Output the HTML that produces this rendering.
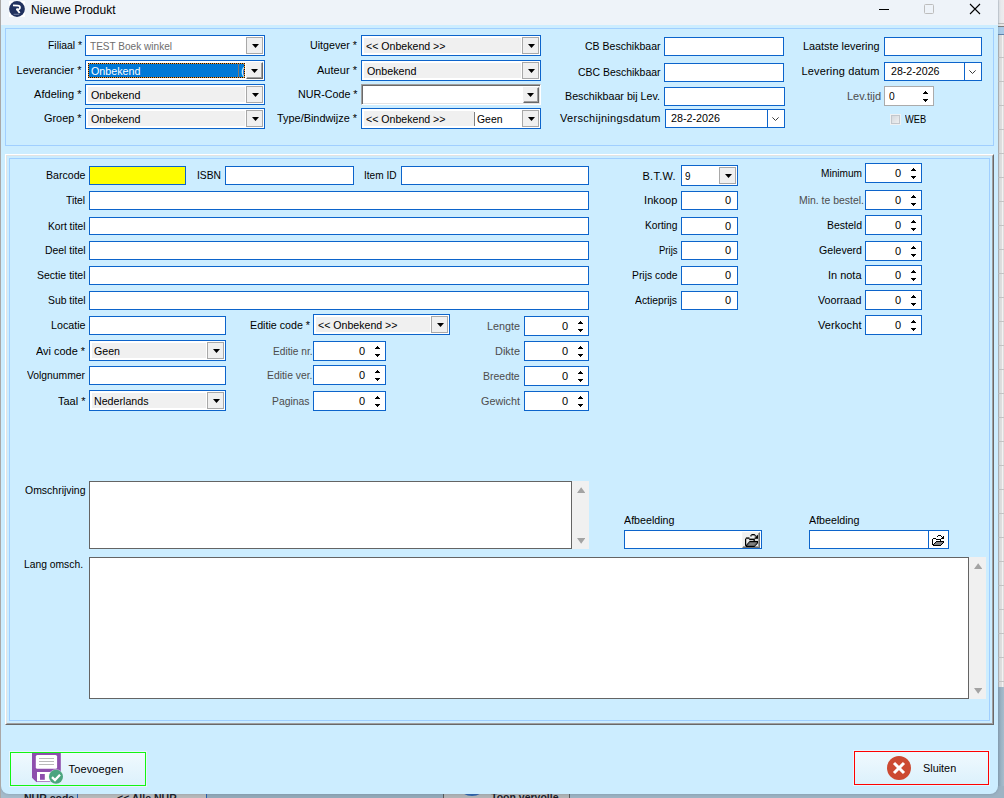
<!DOCTYPE html>
<html lang="nl"><head><meta charset="utf-8"><title>Nieuwe Produkt</title>
<style>

html,body{margin:0;padding:0}
body{width:1004px;height:798px;overflow:hidden;position:relative;background:#e9e9e9;font-family:"Liberation Sans",Arial,sans-serif;font-size:11px;color:#000}
#bgapp{position:absolute;left:0;top:0;width:1004px;height:798px;background:#e4e4e4}
#win{position:absolute;left:1px;top:0;width:997px;height:794px;background:#ccedff;border-radius:0 0 8px 8px;overflow:hidden;box-shadow:0 0 3px 0 rgba(60,90,120,.35)}
#tb{position:absolute;left:0;top:0;width:997px;height:25px;background:#eef3f9}
#ui{position:absolute;left:0;top:0;width:1004px;height:798px}
#ui div,#ui span{position:absolute}
#ui svg{position:absolute}
.in{box-sizing:border-box;border:1px solid #0c64cb;background:#fff}
.cb{box-sizing:border-box;border:1px solid #0c64cb;background:#fff}
#ui .cbf{left:2px;top:2px;bottom:2px;right:19px}
#ui .cbb{right:1px;top:1px;width:17px;height:17px;box-sizing:border-box}
.cbb.flat{background:#f0f0f0;border:1px solid #a8a8a8}
.cbb.raised{background:#f0f0f0;border:1px solid;border-color:#f0f0f0 #696969 #696969 #f0f0f0;box-shadow:inset -1px -1px 0 #a0a0a0}
#ui .cbb .ar{left:4.500px;top:6px}
#ui .cbb.raised .ar{left:4px;top:6px}
.nur{box-sizing:border-box;background:#fff;border:1px solid;border-color:#a0a0a0 #fff #fff #a0a0a0;box-shadow:inset 1px 1px 0 #696969,inset -1px -1px 0 #e3e3e3}
.t{white-space:nowrap;line-height:14px;height:14px;transform-origin:0 50%}

</style></head><body>
<div id="bgapp"></div>
<div style="position:absolute;left:998px;top:0;width:6px;height:23px;background:linear-gradient(90deg,#c9cdd4 0,#e6e7ea 1.5px,#ececee 6px)"></div>
<div style="position:absolute;left:998px;top:23px;width:6px;height:4px;background:linear-gradient(#bcbcbc 0,#bcbcbc 1px,#e6e6e6 1px,#e6e6e6 3px,#7d7d7d 3px)"></div>
<div style="position:absolute;left:998px;top:27px;width:6px;height:8px;background:linear-gradient(#a9cbe8 0,#a9cbe8 7px,#5d82ab 7px)"></div>
<div style="position:absolute;left:998px;top:35px;width:6px;height:652px;background:repeating-linear-gradient(180deg,transparent 0,transparent 22px,#c4c4c4 22px,#c4c4c4 23px,transparent 23px,transparent 24px),linear-gradient(90deg,#b9b9b9 0,#b9b9b9 1px,#dedede 1px,#dedede 4px,#f2f2f2 4px,#f2f2f2 5px,#dedede 5px)"></div>
<div style="position:absolute;left:998px;top:687px;width:6px;height:111px;background:linear-gradient(90deg,#90a7b8,#a6bdcd)"></div>
<div style="position:absolute;left:0;top:786px;width:78px;height:12px;background:#a6bccb"></div>
<div style="position:absolute;left:78px;top:786px;width:128px;height:12px;background:#b8b9ba"></div>
<div style="position:absolute;left:77px;top:786px;width:1px;height:12px;background:#2b5fb0"></div>
<div style="position:absolute;left:206px;top:786px;width:1px;height:12px;background:#2b5fb0"></div>
<div style="position:absolute;left:207px;top:786px;width:236px;height:12px;background:#93a9b9"></div>
<div style="position:absolute;left:443px;top:786px;width:127px;height:12px;background:#b2b4b6"></div>
<div style="position:absolute;left:570px;top:786px;width:434px;height:12px;background:#9db3c3"></div>
<div style="position:absolute;left:443px;top:786px;width:1px;height:12px;background:#5a5a5a"></div>
<div style="position:absolute;left:569px;top:786px;width:1px;height:12px;background:#5a5a5a"></div>
<div style="position:absolute;left:24px;top:791px;font-size:10.500px;font-weight:bold;line-height:14px;color:#1c1c28;white-space:nowrap">NUR code</div>
<div style="position:absolute;left:117px;top:791px;font-size:10.500px;font-weight:bold;line-height:14px;color:#1c1c28;white-space:nowrap">&lt;&lt; Alle NUR..</div>
<div style="position:absolute;left:491px;top:790px;font-size:10.500px;font-weight:bold;line-height:14px;color:#1c1c28;white-space:nowrap">Toon vervolle</div>
<div style="position:absolute;left:461px;top:782px;width:22px;height:14px;box-sizing:border-box;border:3px solid #2d62ad;border-radius:50%"></div>
<div id="win"><div id="tb"></div></div>
<div id="ui">
<div style="left:0;top:0;width:1px;height:798px;background:#aaa8a7"></div>
<div style="left:9px;top:1px;width:16px;height:16px;background:#fff"></div>
<svg width="16" height="16" viewBox="0 0 16 16" style="left:9px;top:1px"><circle cx="8" cy="8" r="7.900" fill="#1f305e"/><path d="M4 4.300L8.800 4.700C11.700 4.900 11.700 8.300 8.800 8.300L7.200 8.300" fill="none" stroke="#fff" stroke-width="1.700" stroke-linejoin="round"/><path d="M7.700 7.900L10.700 12" fill="none" stroke="#fff" stroke-width="1.900"/><path d="M4.600 13.300h5.600" stroke="#9aa3c0" stroke-width=".7"/></svg>
<div style="left:879px;top:9px;width:10px;height:1px;background:#000"></div>
<div style="left:924.200px;top:4.300px;width:9.600px;height:9.600px;box-sizing:border-box;border:1px solid #bdbdbd;border-radius:1.500px"></div>
<svg width="12" height="12" viewBox="0 0 12 12" style="left:969px;top:3px"><path d="M1 1l10 10M11 1L1 11" stroke="#000" stroke-width="1.100" fill="none"/></svg>
<div style="left:5px;top:28px;width:989px;height:118px;box-sizing:border-box;border:1px solid #a0cfff"></div>
<div style="left:5px;top:154px;width:989px;height:571px;box-sizing:border-box;border:1px solid;border-color:#fff #696969 #696969 #fff"></div>
<div style="left:6px;top:155px;width:987px;height:569px;box-sizing:border-box;border:1px solid;border-color:#e3e3e3 #a0a0a0 #a0a0a0 #e3e3e3"></div>
<div style="left:9px;top:158px;width:981px;height:563px;box-sizing:border-box;border:1px solid #a0cfff"></div>
<div class="cb" style="left:85px;top:35px;width:180px;height:21px"><div class="cbf" style="background:#fff"></div><div class="cbb flat"><svg class="ar" width="7" height="4" viewBox="0 0 7 4"><path d="M0 0h7L3.5 4z" fill="#000"/></svg></div></div>
<div class="cb" style="left:85px;top:60px;width:180px;height:21px"><div class="cbf" style="background:#fff"></div><div class="cbb raised"><svg class="ar" width="7" height="4" viewBox="0 0 7 4"><path d="M0 0h7L3.5 4z" fill="#000"/></svg></div></div>
<div class="cb" style="left:85px;top:84px;width:180px;height:21px"><div class="cbf" style="background:#f0f0f0"></div><div class="cbb flat"><svg class="ar" width="7" height="4" viewBox="0 0 7 4"><path d="M0 0h7L3.5 4z" fill="#000"/></svg></div></div>
<div class="cb" style="left:85px;top:108px;width:180px;height:21px"><div class="cbf" style="background:#f0f0f0"></div><div class="cbb flat"><svg class="ar" width="7" height="4" viewBox="0 0 7 4"><path d="M0 0h7L3.5 4z" fill="#000"/></svg></div></div>
<div class="cb" style="left:361px;top:35px;width:180px;height:21px"><div class="cbf" style="background:#f0f0f0"></div><div class="cbb flat"><svg class="ar" width="7" height="4" viewBox="0 0 7 4"><path d="M0 0h7L3.5 4z" fill="#000"/></svg></div></div>
<div class="cb" style="left:361px;top:60px;width:180px;height:21px"><div class="cbf" style="background:#f0f0f0"></div><div class="cbb flat"><svg class="ar" width="7" height="4" viewBox="0 0 7 4"><path d="M0 0h7L3.5 4z" fill="#000"/></svg></div></div>
<div class="cb" style="left:361px;top:108px;width:180px;height:21px"><div class="cbf" style="background:#f0f0f0"></div><div class="cbb flat"><svg class="ar" width="7" height="4" viewBox="0 0 7 4"><path d="M0 0h7L3.5 4z" fill="#000"/></svg></div></div>
<div class="nur" style="left:361px;top:84px;width:180px;height:21px"><div class="cbb raised" style="right:1px;top:2px;width:16px;height:16px"><svg class="ar" width="7" height="4" viewBox="0 0 7 4" style="left:3px;top:5px"><path d="M0 0h7L3.500 4z" fill="#000"/></svg></div></div>
<div style="left:88px;top:63px;width:157px;height:15px;box-sizing:border-box;background:#0078d7;border:1px solid #f0962e;outline:1px dotted #111;outline-offset:-1px"></div>
<div style="left:241px;top:64px;width:3px;height:13px;overflow:hidden"><span class="t" style="left:0;top:0;color:#fff;font-size:11px">(</span></div>
<div style="left:238px;top:64px;width:1px;height:13px;background:#777"></div>
<div style="left:474px;top:110px;width:48px;height:17px;background:#fff"></div>
<div style="left:474px;top:112px;width:1px;height:14px;background:#808080"></div>
<div class="in" style="left:664px;top:37px;width:120px;height:19px;background:#fff;border-color:#0c64cb"></div>
<div class="in" style="left:664px;top:63px;width:120px;height:19px;background:#fff;border-color:#0c64cb"></div>
<div class="in" style="left:664px;top:87px;width:121px;height:19px;background:#fff;border-color:#0c64cb"></div>
<div class="in" style="left:665px;top:109px;width:120px;height:19px;background:#fff;border-color:#0c64cb"></div>
<div style="left:767px;top:110px;width:1px;height:17px;background:#0c64cb"></div>
<svg width="7" height="4" viewBox="0 0 7 4" style="position:absolute;left:772px;top:117px"><path d="M0.400 0.400L3.500 3.500L6.600 0.400" fill="none" stroke="#3a3a3a" stroke-width="1"/></svg>
<div class="in" style="left:884px;top:37px;width:98px;height:19px;background:#fff;border-color:#0c64cb"></div>
<div class="in" style="left:884px;top:62px;width:98px;height:19px;background:#fff;border-color:#0c64cb"></div>
<div style="left:964px;top:63px;width:1px;height:17px;background:#0c64cb"></div>
<svg width="7" height="4" viewBox="0 0 7 4" style="position:absolute;left:969px;top:70px"><path d="M0.400 0.400L3.500 3.500L6.600 0.400" fill="none" stroke="#3a3a3a" stroke-width="1"/></svg>
<div class="in" style="left:884px;top:86px;width:50px;height:20px;background:#fff;border-color:#ababab"></div>
<svg width="5" height="3" viewBox="0 0 5 3" shape-rendering="crispEdges" style="position:absolute;left:923px;top:91px"><path d="M2 0h1v1h1v1h1v1H0V2h1V1h1z" fill="#000"/></svg>
<svg width="5" height="3" viewBox="0 0 5 3" shape-rendering="crispEdges" style="position:absolute;left:923px;top:99px"><path d="M0 0h5v1H4v1H3v1H2V2H1V1H0z" fill="#000"/></svg>
<div style="left:890px;top:114px;width:11px;height:11px;box-sizing:border-box;border:1px solid #eef1f3;background:linear-gradient(135deg,#d2d6db,#f1f2f3);box-shadow:inset 0 0 0 1px #c3c7cc"></div>
<div class="in" style="left:89px;top:166px;width:97px;height:19px;background:#ffff00;border-color:#0c64cb"></div>
<div class="in" style="left:225px;top:166px;width:129px;height:19px;background:#fff;border-color:#0c64cb"></div>
<div class="in" style="left:401px;top:166px;width:188px;height:19px;background:#fff;border-color:#0c64cb"></div>
<div class="in" style="left:89px;top:191px;width:500px;height:19px;background:#fff;border-color:#0c64cb"></div>
<div class="in" style="left:89px;top:217px;width:500px;height:18px;background:#fff;border-color:#0c64cb"></div>
<div class="in" style="left:89px;top:241px;width:500px;height:19px;background:#fff;border-color:#0c64cb"></div>
<div class="in" style="left:89px;top:266px;width:500px;height:19px;background:#fff;border-color:#0c64cb"></div>
<div class="in" style="left:89px;top:291px;width:500px;height:19px;background:#fff;border-color:#0c64cb"></div>
<div class="in" style="left:89px;top:316px;width:137px;height:19px;background:#fff;border-color:#0c64cb"></div>
<div class="cb" style="left:89px;top:340px;width:137px;height:21px"><div class="cbf" style="background:#f0f0f0"></div><div class="cbb flat"><svg class="ar" width="7" height="4" viewBox="0 0 7 4"><path d="M0 0h7L3.5 4z" fill="#000"/></svg></div></div>
<div class="in" style="left:89px;top:366px;width:137px;height:19px;background:#fff;border-color:#0c64cb"></div>
<div class="cb" style="left:89px;top:390px;width:137px;height:21px"><div class="cbf" style="background:#f0f0f0"></div><div class="cbb flat"><svg class="ar" width="7" height="4" viewBox="0 0 7 4"><path d="M0 0h7L3.5 4z" fill="#000"/></svg></div></div>
<div class="cb" style="left:313px;top:314px;width:137px;height:21px"><div class="cbf" style="background:#f0f0f0"></div><div class="cbb flat"><svg class="ar" width="7" height="4" viewBox="0 0 7 4"><path d="M0 0h7L3.5 4z" fill="#000"/></svg></div></div>
<div class="in" style="left:313px;top:341px;width:73px;height:20px;background:#fff;border-color:#0c64cb"></div>
<svg width="5" height="3" viewBox="0 0 5 3" shape-rendering="crispEdges" style="position:absolute;left:375px;top:346px"><path d="M2 0h1v1h1v1h1v1H0V2h1V1h1z" fill="#000"/></svg>
<svg width="5" height="3" viewBox="0 0 5 3" shape-rendering="crispEdges" style="position:absolute;left:375px;top:354px"><path d="M0 0h5v1H4v1H3v1H2V2H1V1H0z" fill="#000"/></svg>
<div class="in" style="left:313px;top:365px;width:73px;height:20px;background:#fff;border-color:#0c64cb"></div>
<svg width="5" height="3" viewBox="0 0 5 3" shape-rendering="crispEdges" style="position:absolute;left:375px;top:370px"><path d="M2 0h1v1h1v1h1v1H0V2h1V1h1z" fill="#000"/></svg>
<svg width="5" height="3" viewBox="0 0 5 3" shape-rendering="crispEdges" style="position:absolute;left:375px;top:378px"><path d="M0 0h5v1H4v1H3v1H2V2H1V1H0z" fill="#000"/></svg>
<div class="in" style="left:313px;top:391px;width:73px;height:20px;background:#fff;border-color:#0c64cb"></div>
<svg width="5" height="3" viewBox="0 0 5 3" shape-rendering="crispEdges" style="position:absolute;left:375px;top:396px"><path d="M2 0h1v1h1v1h1v1H0V2h1V1h1z" fill="#000"/></svg>
<svg width="5" height="3" viewBox="0 0 5 3" shape-rendering="crispEdges" style="position:absolute;left:375px;top:404px"><path d="M0 0h5v1H4v1H3v1H2V2H1V1H0z" fill="#000"/></svg>
<div class="in" style="left:524px;top:316px;width:65px;height:20px;background:#fff;border-color:#0c64cb"></div>
<svg width="5" height="3" viewBox="0 0 5 3" shape-rendering="crispEdges" style="position:absolute;left:578px;top:321px"><path d="M2 0h1v1h1v1h1v1H0V2h1V1h1z" fill="#000"/></svg>
<svg width="5" height="3" viewBox="0 0 5 3" shape-rendering="crispEdges" style="position:absolute;left:578px;top:329px"><path d="M0 0h5v1H4v1H3v1H2V2H1V1H0z" fill="#000"/></svg>
<div class="in" style="left:524px;top:341px;width:65px;height:20px;background:#fff;border-color:#0c64cb"></div>
<svg width="5" height="3" viewBox="0 0 5 3" shape-rendering="crispEdges" style="position:absolute;left:578px;top:346px"><path d="M2 0h1v1h1v1h1v1H0V2h1V1h1z" fill="#000"/></svg>
<svg width="5" height="3" viewBox="0 0 5 3" shape-rendering="crispEdges" style="position:absolute;left:578px;top:354px"><path d="M0 0h5v1H4v1H3v1H2V2H1V1H0z" fill="#000"/></svg>
<div class="in" style="left:524px;top:366px;width:65px;height:20px;background:#fff;border-color:#0c64cb"></div>
<svg width="5" height="3" viewBox="0 0 5 3" shape-rendering="crispEdges" style="position:absolute;left:578px;top:371px"><path d="M2 0h1v1h1v1h1v1H0V2h1V1h1z" fill="#000"/></svg>
<svg width="5" height="3" viewBox="0 0 5 3" shape-rendering="crispEdges" style="position:absolute;left:578px;top:379px"><path d="M0 0h5v1H4v1H3v1H2V2H1V1H0z" fill="#000"/></svg>
<div class="in" style="left:524px;top:391px;width:65px;height:20px;background:#fff;border-color:#0c64cb"></div>
<svg width="5" height="3" viewBox="0 0 5 3" shape-rendering="crispEdges" style="position:absolute;left:578px;top:396px"><path d="M2 0h1v1h1v1h1v1H0V2h1V1h1z" fill="#000"/></svg>
<svg width="5" height="3" viewBox="0 0 5 3" shape-rendering="crispEdges" style="position:absolute;left:578px;top:404px"><path d="M0 0h5v1H4v1H3v1H2V2H1V1H0z" fill="#000"/></svg>
<div class="cb" style="left:681px;top:165px;width:57px;height:21px"><div class="cbf" style="background:#fff"></div><div class="cbb flat"><svg class="ar" width="7" height="4" viewBox="0 0 7 4"><path d="M0 0h7L3.5 4z" fill="#000"/></svg></div></div>
<div class="in" style="left:681px;top:191px;width:57px;height:19px;background:#fff;border-color:#0c64cb"></div>
<div class="in" style="left:681px;top:217px;width:57px;height:18px;background:#fff;border-color:#0c64cb"></div>
<div class="in" style="left:681px;top:241px;width:57px;height:19px;background:#fff;border-color:#0c64cb"></div>
<div class="in" style="left:681px;top:266px;width:57px;height:19px;background:#fff;border-color:#0c64cb"></div>
<div class="in" style="left:681px;top:291px;width:57px;height:19px;background:#fff;border-color:#0c64cb"></div>
<div class="in" style="left:865px;top:163px;width:57px;height:20px;background:#fff;border-color:#0c64cb"></div>
<svg width="5" height="3" viewBox="0 0 5 3" shape-rendering="crispEdges" style="position:absolute;left:911px;top:168px"><path d="M2 0h1v1h1v1h1v1H0V2h1V1h1z" fill="#000"/></svg>
<svg width="5" height="3" viewBox="0 0 5 3" shape-rendering="crispEdges" style="position:absolute;left:911px;top:176px"><path d="M0 0h5v1H4v1H3v1H2V2H1V1H0z" fill="#000"/></svg>
<div class="in" style="left:865px;top:190px;width:57px;height:20px;background:#fff;border-color:#0c64cb"></div>
<svg width="5" height="3" viewBox="0 0 5 3" shape-rendering="crispEdges" style="position:absolute;left:911px;top:195px"><path d="M2 0h1v1h1v1h1v1H0V2h1V1h1z" fill="#000"/></svg>
<svg width="5" height="3" viewBox="0 0 5 3" shape-rendering="crispEdges" style="position:absolute;left:911px;top:203px"><path d="M0 0h5v1H4v1H3v1H2V2H1V1H0z" fill="#000"/></svg>
<div class="in" style="left:865px;top:215px;width:57px;height:20px;background:#fff;border-color:#0c64cb"></div>
<svg width="5" height="3" viewBox="0 0 5 3" shape-rendering="crispEdges" style="position:absolute;left:911px;top:220px"><path d="M2 0h1v1h1v1h1v1H0V2h1V1h1z" fill="#000"/></svg>
<svg width="5" height="3" viewBox="0 0 5 3" shape-rendering="crispEdges" style="position:absolute;left:911px;top:228px"><path d="M0 0h5v1H4v1H3v1H2V2H1V1H0z" fill="#000"/></svg>
<div class="in" style="left:865px;top:241px;width:57px;height:20px;background:#fff;border-color:#0c64cb"></div>
<svg width="5" height="3" viewBox="0 0 5 3" shape-rendering="crispEdges" style="position:absolute;left:911px;top:246px"><path d="M2 0h1v1h1v1h1v1H0V2h1V1h1z" fill="#000"/></svg>
<svg width="5" height="3" viewBox="0 0 5 3" shape-rendering="crispEdges" style="position:absolute;left:911px;top:254px"><path d="M0 0h5v1H4v1H3v1H2V2H1V1H0z" fill="#000"/></svg>
<div class="in" style="left:865px;top:265px;width:57px;height:20px;background:#fff;border-color:#0c64cb"></div>
<svg width="5" height="3" viewBox="0 0 5 3" shape-rendering="crispEdges" style="position:absolute;left:911px;top:270px"><path d="M2 0h1v1h1v1h1v1H0V2h1V1h1z" fill="#000"/></svg>
<svg width="5" height="3" viewBox="0 0 5 3" shape-rendering="crispEdges" style="position:absolute;left:911px;top:278px"><path d="M0 0h5v1H4v1H3v1H2V2H1V1H0z" fill="#000"/></svg>
<div class="in" style="left:865px;top:290px;width:57px;height:20px;background:#fff;border-color:#0c64cb"></div>
<svg width="5" height="3" viewBox="0 0 5 3" shape-rendering="crispEdges" style="position:absolute;left:911px;top:295px"><path d="M2 0h1v1h1v1h1v1H0V2h1V1h1z" fill="#000"/></svg>
<svg width="5" height="3" viewBox="0 0 5 3" shape-rendering="crispEdges" style="position:absolute;left:911px;top:303px"><path d="M0 0h5v1H4v1H3v1H2V2H1V1H0z" fill="#000"/></svg>
<div class="in" style="left:865px;top:315px;width:57px;height:20px;background:#fff;border-color:#0c64cb"></div>
<svg width="5" height="3" viewBox="0 0 5 3" shape-rendering="crispEdges" style="position:absolute;left:911px;top:320px"><path d="M2 0h1v1h1v1h1v1H0V2h1V1h1z" fill="#000"/></svg>
<svg width="5" height="3" viewBox="0 0 5 3" shape-rendering="crispEdges" style="position:absolute;left:911px;top:328px"><path d="M0 0h5v1H4v1H3v1H2V2H1V1H0z" fill="#000"/></svg>
<div class="in" style="left:89px;top:481px;width:483px;height:68px;border-color:#646464"></div>
<div style="left:572px;top:481px;width:17px;height:68px;background:#f0f0f0"></div>
<svg width="8.400" height="6" viewBox="0 0 8.400 6" style="position:absolute;left:576.7px;top:487px"><path d="M4.200 0.300L8.400 6H0z" fill="#a3a3a3"/></svg>
<svg width="8.400" height="6" viewBox="0 0 8.400 6" style="position:absolute;left:576.7px;top:538px"><path d="M0 0h8.400L4.200 5.700z" fill="#a3a3a3"/></svg>
<div class="in" style="left:89px;top:557px;width:880px;height:142px;border-color:#646464"></div>
<div style="left:969px;top:557px;width:17px;height:142px;background:#f0f0f0"></div>
<svg width="8.400" height="6" viewBox="0 0 8.400 6" style="position:absolute;left:973.7px;top:563px"><path d="M4.200 0.300L8.400 6H0z" fill="#a3a3a3"/></svg>
<svg width="8.400" height="6" viewBox="0 0 8.400 6" style="position:absolute;left:973.7px;top:688px"><path d="M0 0h8.400L4.200 5.700z" fill="#a3a3a3"/></svg>
<div class="in" style="left:624px;top:530px;width:138px;height:19px;background:#fff;border-color:#0c64cb"></div>
<div style="left:742px;top:532px;width:18px;height:16px;box-sizing:border-box;background:#f0f0f0;border:1px solid;border-color:#f4f4f4 #6d6d6d #6d6d6d #f4f4f4;box-shadow:inset -1px -1px 0 #a0a0a0"></div>
<svg width="13" height="13" viewBox="0 0 12 11" preserveAspectRatio="none" style="position:absolute;left:745px;top:534px"><path d="M4 7h7v1h-7zM3 8h7v1h-7zM2 9h7v1h-7z" fill="#808080"/><path d="M6 0h3v1h-3zM5 1h1v1h-1zM9 1h1v1h-1zM11 1h1v1h-1zM10 2h2v1h-2zM1 3h3v1h-3zM9 3h3v1h-3zM0 4h1v1h-1zM4 4h5v1h-5zM0 5h1v1h-1zM8 5h1v1h-1zM0 6h1v1h-1zM4 6h8v1h-8zM0 7h1v1h-1zM3 7h1v1h-1zM11 7h1v1h-1zM0 8h1v1h-1zM2 8h1v1h-1zM10 8h1v1h-1zM0 9h1v1h-1zM1 9h1v1h-1zM9 9h1v1h-1zM1 10h8v1h-8z" fill="#000" stroke="#000" stroke-width=".2"/></svg>
<div class="in" style="left:809px;top:530px;width:140px;height:19px;background:#fff;border-color:#0c64cb"></div>
<div style="left:928px;top:531px;width:1px;height:17px;background:#0c64cb"></div>
<svg width="12" height="11" viewBox="0 0 12 11" preserveAspectRatio="none" shape-rendering="crispEdges" style="position:absolute;left:932px;top:535px"><path d="M4 7h7v1h-7zM3 8h7v1h-7zM2 9h7v1h-7z" fill="#808080"/><path d="M6 0h3v1h-3zM5 1h1v1h-1zM9 1h1v1h-1zM11 1h1v1h-1zM10 2h2v1h-2zM1 3h3v1h-3zM9 3h3v1h-3zM0 4h1v1h-1zM4 4h5v1h-5zM0 5h1v1h-1zM8 5h1v1h-1zM0 6h1v1h-1zM4 6h8v1h-8zM0 7h1v1h-1zM3 7h1v1h-1zM11 7h1v1h-1zM0 8h1v1h-1zM2 8h1v1h-1zM10 8h1v1h-1zM0 9h1v1h-1zM1 9h1v1h-1zM9 9h1v1h-1zM1 10h8v1h-8z" fill="#000"/></svg>
<div style="left:10px;top:752px;width:136px;height:34px;box-sizing:border-box;border:1px solid #12f412;background:linear-gradient(#f0f9fe,#dcf1fc);box-shadow:0 0 0 1px #e6f5fd"></div>
<div style="left:854px;top:751px;width:135px;height:34px;box-sizing:border-box;border:1px solid #f00;background:linear-gradient(#f0f9fe,#dcf1fc);box-shadow:0 0 0 1px #e6f5fd"></div>
<svg width="32" height="32" viewBox="0 0 32 32" style="position:absolute;left:31px;top:753px">
<path d="M1 0h28.800v29H5.300L1 24.700z" fill="#8e4fad"/>
<rect x="4.800" y="2" width="21.300" height="13.800" rx="1.600" fill="#fff"/>
<path d="M8 5.500h15M8 8.500h15M8 11.500h15" stroke="#b9b9b9" stroke-width="1"/>
<rect x="6" y="19" width="16" height="9.300" fill="#fff"/>
<rect x="9" y="21" width="4.800" height="5.800" fill="#8e4fad"/>
<circle cx="25" cy="23.800" r="7.600" fill="#e6f5ef" fill-opacity=".7"/>
<circle cx="25" cy="23.800" r="7" fill="#4ba57f"/>
<path d="M21 24.200l3 2.900 5-5.300" fill="none" stroke="#fff" stroke-width="2.300"/>
</svg>
<svg width="24" height="24" viewBox="0 0 24 24" style="position:absolute;left:887px;top:756px">
<circle cx="12" cy="12" r="12" fill="#cc4a32"/>
<path d="M7 7l10 10M17 7L7 17" stroke="#fff" stroke-width="3"/>
</svg>
<span class="t" id="t0" style="left:47.5px;top:38px;font-size:11px;color:#000;transform:scaleX(0.9424);">Filiaal *</span>
<span class="t" id="t1" style="left:16.5px;top:63px;font-size:11px;color:#000;letter-spacing:0.014px;">Leverancier *</span>
<span class="t" id="t2" style="left:34px;top:87px;font-size:11px;color:#000;letter-spacing:0.045px;">Afdeling *</span>
<span class="t" id="t3" style="left:44px;top:111px;font-size:11px;color:#000;transform:scaleX(0.9889);">Groep *</span>
<span class="t" id="t4" style="left:310px;top:38px;font-size:11px;color:#000;transform:scaleX(0.9731);">Uitgever *</span>
<span class="t" id="t5" style="left:317px;top:63px;font-size:11px;color:#000;letter-spacing:0.036px;">Auteur *</span>
<span class="t" id="t6" style="left:297.5px;top:87px;font-size:11px;color:#000;transform:scaleX(0.9732);">NUR-Code *</span>
<span class="t" id="t7" style="left:277px;top:111px;font-size:11px;color:#000;transform:scaleX(0.9911);">Type/Bindwijze *</span>
<span class="t" id="t8" style="left:584.5px;top:39px;font-size:11px;color:#000;transform:scaleX(0.9572);">CB Beschikbaar</span>
<span class="t" id="t9" style="left:577.5px;top:65px;font-size:11px;color:#000;transform:scaleX(0.9502);">CBC Beschikbaar</span>
<span class="t" id="t10" style="left:564.5px;top:89px;font-size:11px;color:#000;transform:scaleX(0.9731);">Beschikbaar bij Lev.</span>
<span class="t" id="t11" style="left:560px;top:111px;font-size:11px;color:#000;letter-spacing:0.301px;">Verschijningsdatum</span>
<span class="t" id="t12" style="left:802.5px;top:39px;font-size:11px;color:#000;transform:scaleX(0.9849);">Laatste levering</span>
<span class="t" id="t13" style="left:801.5px;top:64px;font-size:11px;color:#000;letter-spacing:0.167px;">Levering datum</span>
<span class="t" id="t14" style="left:846.5px;top:89px;font-size:11px;color:#4c4c4c;transform:scaleX(0.9986);">Lev.tijd</span>
<span class="t" id="t15" style="left:905px;top:112px;font-size:10.5px;color:#000;transform:scaleX(0.8862);">WEB</span>
<span class="t" id="t16" style="left:89.5px;top:39px;font-size:11px;color:#6d6d6d;transform:scaleX(0.9144);">TEST Boek winkel</span>
<span class="t" id="t17" style="left:90.8px;top:64px;font-size:11px;color:#fff;transform:scaleX(0.9751);">Onbekend</span>
<span class="t" id="t18" style="left:90.8px;top:88px;font-size:11px;color:#000;transform:scaleX(0.9751);">Onbekend</span>
<span class="t" id="t19" style="left:90.8px;top:112px;font-size:11px;color:#000;transform:scaleX(0.9751);">Onbekend</span>
<span class="t" id="t20" style="left:366px;top:39px;font-size:11px;color:#000;transform:scaleX(0.9627);">&lt;&lt; Onbekend &gt;&gt;</span>
<span class="t" id="t21" style="left:366.5px;top:64px;font-size:11px;color:#000;transform:scaleX(0.9751);">Onbekend</span>
<span class="t" id="t22" style="left:366px;top:112px;font-size:11px;color:#000;transform:scaleX(0.9627);">&lt;&lt; Onbekend &gt;&gt;</span>
<span class="t" id="t23" style="left:476.5px;top:112px;font-size:11px;color:#000;transform:scaleX(0.9472);">Geen</span>
<span class="t" id="t24" style="left:671px;top:111px;font-size:11.5px;color:#000;transform:scaleX(0.9344);">28-2-2026</span>
<span class="t" id="t25" style="left:890.5px;top:64px;font-size:11.5px;color:#000;transform:scaleX(0.9249);">28-2-2026</span>
<span class="t" id="t26" style="left:888.9px;top:89px;font-size:11.5px;color:#000;transform:scaleX(0.8898);">0</span>
<span class="t" id="t27" style="left:45.5px;top:168px;font-size:11px;color:#000;transform:scaleX(0.9638);">Barcode</span>
<span class="t" id="t28" style="left:196.5px;top:168px;font-size:11px;color:#000;transform:scaleX(0.9343);">ISBN</span>
<span class="t" id="t29" style="left:363.5px;top:168px;font-size:11px;color:#000;transform:scaleX(0.9167);">Item ID</span>
<span class="t" id="t30" style="left:66px;top:193px;font-size:11px;color:#000;transform:scaleX(0.9325);">Titel</span>
<span class="t" id="t31" style="left:47.5px;top:219px;font-size:11px;color:#000;transform:scaleX(0.9292);">Kort titel</span>
<span class="t" id="t32" style="left:44.5px;top:243px;font-size:11px;color:#000;transform:scaleX(0.9463);">Deel titel</span>
<span class="t" id="t33" style="left:36.5px;top:268px;font-size:11px;color:#000;transform:scaleX(0.9557);">Sectie titel</span>
<span class="t" id="t34" style="left:47.5px;top:293px;font-size:11px;color:#000;transform:scaleX(0.9434);">Sub titel</span>
<span class="t" id="t35" style="left:50.5px;top:318px;font-size:11px;color:#000;transform:scaleX(0.9723);">Locatie</span>
<span class="t" id="t36" style="left:36px;top:344px;font-size:11px;color:#000;transform:scaleX(0.9933);">Avi code *</span>
<span class="t" id="t37" style="left:27px;top:368px;font-size:11px;color:#000;transform:scaleX(0.9390);">Volgnummer</span>
<span class="t" id="t38" style="left:57.5px;top:394px;font-size:11px;color:#000;transform:scaleX(0.9989);">Taal *</span>
<span class="t" id="t39" style="left:94px;top:344px;font-size:11px;color:#000;transform:scaleX(0.9658);">Geen</span>
<span class="t" id="t40" style="left:94px;top:394px;font-size:11px;color:#000;transform:scaleX(0.9686);">Nederlands</span>
<span class="t" id="t41" style="left:249.5px;top:318px;font-size:11px;color:#000;transform:scaleX(0.9714);">Editie code *</span>
<span class="t" id="t42" style="left:272.6px;top:344px;font-size:11px;color:#4c4c4c;transform:scaleX(0.9250);">Editie nr.</span>
<span class="t" id="t43" style="left:266.7px;top:368px;font-size:11px;color:#4c4c4c;transform:scaleX(0.9418);">Editie ver.</span>
<span class="t" id="t44" style="left:271.6px;top:394px;font-size:11px;color:#4c4c4c;transform:scaleX(0.9430);">Paginas</span>
<span class="t" id="t45" style="left:318px;top:318px;font-size:11px;color:#000;transform:scaleX(0.9627);">&lt;&lt; Onbekend &gt;&gt;</span>
<span class="t" id="t46" style="left:487px;top:319px;font-size:11px;color:#4c4c4c;transform:scaleX(0.9805);">Lengte</span>
<span class="t" id="t47" style="left:495px;top:344px;font-size:11px;color:#4c4c4c;transform:scaleX(0.9975);">Dikte</span>
<span class="t" id="t48" style="left:483.3px;top:369px;font-size:11px;color:#4c4c4c;transform:scaleX(0.9525);">Breedte</span>
<span class="t" id="t49" style="left:481px;top:394px;font-size:11px;color:#4c4c4c;transform:scaleX(0.9811);">Gewicht</span>
<span class="t" id="t50" style="left:642.5px;top:169px;font-size:11px;color:#000;letter-spacing:0.244px;">B.T.W.</span>
<span class="t" id="t51" style="left:685px;top:169px;font-size:11px;color:#000;transform:scaleX(0.8980);">9</span>
<span class="t" id="t52" style="left:644px;top:193px;font-size:11px;color:#000;letter-spacing:0.074px;">Inkoop</span>
<span class="t" id="t53" style="left:644.5px;top:218px;font-size:11px;color:#000;transform:scaleX(0.9323);">Korting</span>
<span class="t" id="t54" style="left:658.5px;top:243px;font-size:11px;color:#000;transform:scaleX(0.8649);">Prijs</span>
<span class="t" id="t55" style="left:631.5px;top:268px;font-size:11px;color:#000;transform:scaleX(0.9421);">Prijs code</span>
<span class="t" id="t56" style="left:635px;top:293px;font-size:11px;color:#000;transform:scaleX(0.9412);">Actieprijs</span>
<span class="t" id="t57" style="left:820.5px;top:166px;font-size:11px;color:#000;transform:scaleX(0.9188);">Minimum</span>
<span class="t" id="t58" style="left:799.4px;top:193px;font-size:11px;color:#4c4c4c;transform:scaleX(0.9477);">Min. te bestel.</span>
<span class="t" id="t59" style="left:826.5px;top:218px;font-size:11px;color:#000;transform:scaleX(0.9536);">Besteld</span>
<span class="t" id="t60" style="left:818.5px;top:243px;font-size:11px;color:#000;transform:scaleX(0.9632);">Geleverd</span>
<span class="t" id="t61" style="left:828px;top:268px;font-size:11px;color:#000;transform:scaleX(0.9958);">In nota</span>
<span class="t" id="t62" style="left:818px;top:293px;font-size:11px;color:#000;transform:scaleX(0.9741);">Voorraad</span>
<span class="t" id="t63" style="left:818px;top:318px;font-size:11px;color:#000;letter-spacing:0.098px;">Verkocht</span>
<span class="t" id="t64" style="left:24.5px;top:483px;font-size:11px;color:#000;transform:scaleX(0.9516);">Omschrijving</span>
<span class="t" id="t65" style="left:23.5px;top:557px;font-size:11px;color:#000;transform:scaleX(0.9367);">Lang omsch.</span>
<span class="t" id="t66" style="left:624px;top:513px;font-size:11px;color:#000;transform:scaleX(0.9712);">Afbeelding</span>
<span class="t" id="t67" style="left:809px;top:513px;font-size:11px;color:#000;transform:scaleX(0.9712);">Afbeelding</span>
<span class="t" id="t68" style="left:68.5px;top:762px;font-size:11px;color:#000;letter-spacing:0.146px;">Toevoegen</span>
<span class="t" id="t69" style="left:923.2px;top:761px;font-size:11px;color:#000;transform:scaleX(0.9869);">Sluiten</span>
<span class="t" id="t70" style="left:30.5px;top:3px;font-size:12px;color:#000;transform:scaleX(0.9974);">Nieuwe Produkt</span>
<span class="t" style="left:358.9px;top:344px;font-size:11px">0</span>
<span class="t" style="left:358.9px;top:368px;font-size:11px">0</span>
<span class="t" style="left:358.9px;top:394px;font-size:11px">0</span>
<span class="t" style="left:561.9px;top:319px;font-size:11px">0</span>
<span class="t" style="left:561.9px;top:344px;font-size:11px">0</span>
<span class="t" style="left:561.9px;top:369px;font-size:11px">0</span>
<span class="t" style="left:561.9px;top:394px;font-size:11px">0</span>
<span class="t" style="left:724.9px;top:193px;font-size:11px">0</span>
<span class="t" style="left:724.9px;top:219px;font-size:11px">0</span>
<span class="t" style="left:724.9px;top:243px;font-size:11px">0</span>
<span class="t" style="left:724.9px;top:268px;font-size:11px">0</span>
<span class="t" style="left:724.9px;top:293px;font-size:11px">0</span>
<span class="t" style="left:894.9px;top:166px;font-size:11px">0</span>
<span class="t" style="left:894.9px;top:193px;font-size:11px">0</span>
<span class="t" style="left:894.9px;top:218px;font-size:11px">0</span>
<span class="t" style="left:894.9px;top:244px;font-size:11px">0</span>
<span class="t" style="left:894.9px;top:268px;font-size:11px">0</span>
<span class="t" style="left:894.9px;top:293px;font-size:11px">0</span>
<span class="t" style="left:894.9px;top:318px;font-size:11px">0</span>
</div></body></html>
